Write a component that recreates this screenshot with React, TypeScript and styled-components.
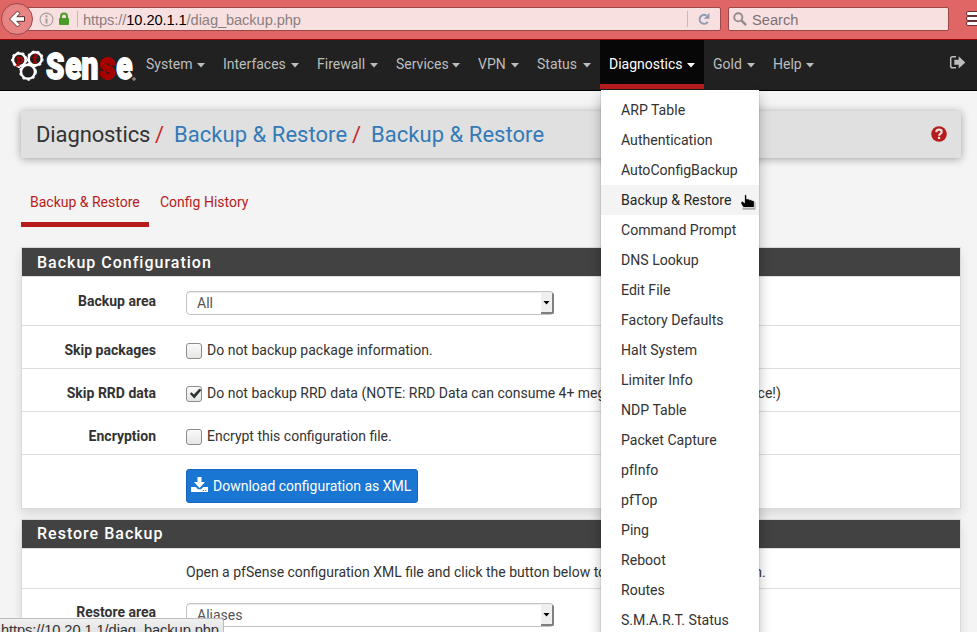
import React from 'react';
import styled, { createGlobalStyle } from 'styled-components';

const Global = createGlobalStyle`
  * { box-sizing: border-box; }
  html, body { margin: 0; padding: 0; overflow: hidden; }
  body { font-family: Roboto, sans-serif; font-size: 14px; line-height: 20px; color: #333; background: #f4f4f4; }
`;

const Screen = styled.div`
  position: relative;
  width: 977px;
  height: 632px;
  overflow: hidden;
`;

/* Browser toolbar */
const Toolbar = styled.div`
  display: flex;
  height: 40px;
  padding-top: 7px;
  background: #e06666;
  border-bottom: 1px solid #980505;
  font-family: 'Liberation Sans', sans-serif;
  font-size: 14.67px;
`;
const Field = styled.div`
  display: flex;
  flex: none;
  align-items: center;
  height: 24px;
  background: #f8e0e0;
  border: 1px solid #9c4848;
  border-radius: 2px;
  white-space: nowrap;
  color: #7d7070;
`;
const UrlField = styled(Field)`
  width: 704px;
  margin-left: 17px;
  padding-left: 21px;
`;
const SearchField = styled(Field)`
  width: 221px;
  margin-left: 7px;
  padding-left: 4px;
`;
const UrlText = styled.span`
  flex: 1;
  margin-left: 5px;
  padding-top: 1px;
  color: #8b7f7f;
  letter-spacing: -0.09px;
  b { font-weight: normal; color: #000; }
`;
const SearchText = styled.span`
  margin-left: 5px;
  padding-top: 1px;
`;
const Divider = styled.i<{ $gap?: number }>`
  width: 1px;
  height: 16px;
  margin-left: ${p => p.$gap ?? 0}px;
  background: #d0b4b4;
`;
const ToolDivider = styled.i`
  width: 1px;
  height: 36px;
  margin: -5px 0 0 5px;
  background: #ea8e8e;
`;
const MenuIcon = styled.svg`
  margin: 4px 0 0 12px;
  flex: none;
`;
const Back = styled.svg`
  position: absolute;
  left: 0;
  top: 2px;
`;
const Lock = styled.svg`margin-left: 4px;`;
const Reload = styled.svg`margin: 0 9px;`;

/* Navigation bar */
const Nav = styled.nav`
  display: flex;
  height: 51px;
  background: #212121;
  border-bottom: 1px solid #000;
`;
const Brand = styled.svg`
  width: 137px;
  height: 50px;
  flex: none;
`;
const NavItem = styled.a<{ $w: number; $active?: boolean }>`
  display: flex;
  width: ${p => p.$w}px;
  height: 49px;
  padding: 14px 0 0 9px;
  color: ${p => (p.$active ? '#fff' : '#bdbdbd')};
  background: ${p => (p.$active ? '#070707' : 'transparent')};
  border-bottom: ${p => (p.$active ? '5px solid #b71c1c' : '0')};
`;
const NavLabel = styled.span`flex: 1;`;
const Caret = styled.i`
  width: 8px;
  height: 4.5px;
  margin: 9px 9px 0 0;
  background: currentColor;
  clip-path: polygon(0 0, 100% 0, 50% 100%);
`;
const Exit = styled.svg`margin: 14px 11px 0 auto;`;

/* Page */
const Page = styled.main`
  padding: 20px 16px 0 21px;
`;
const Crumbs = styled.header`
  display: flex;
  align-items: center;
  height: 47px;
  padding: 0 14px 0 15px;
  background: #e0e0e0;
  border-radius: 2px;
  box-shadow: 0 1px 8px rgba(0, 0, 0, 0.35);
  font-size: 22px;
  svg { margin: -1px 0 0 auto; }
`;
const Crumb = styled.span<{ $w: number; $link?: boolean }>`
  width: ${p => p.$w}px;
  letter-spacing: ${p => (p.$link ? 0.04 : -0.12)}px;
  color: ${p => (p.$link ? '#337ab7' : '#333')};
`;
const Slash = styled.span`
  width: 19px;
  color: #c62828;
`;
const Tabs = styled.div`
  display: flex;
  height: 36px;
  margin: 33px 0 20px;
`;
const Tab = styled.a<{ $active?: boolean; $w: number }>`
  width: ${p => p.$w}px;
  margin-right: 2px;
  padding: 1px 0 0 9px;
  color: #b71c1c;
  border-bottom: ${p => (p.$active ? '5px solid #b71c1c' : '0')};
`;
const Panel = styled.section`
  width: 940px;
  margin-bottom: 10px;
  background: #fff;
  border: 1px solid #dadada;
  box-shadow: 0 6px 10px rgba(0, 0, 0, 0.1);
`;
const PanelTitle = styled.h2<{ $pad: number }>`
  height: 28px;
  margin: 0;
  padding: ${p => p.$pad}px 15px 0;
  background: #424242;
  color: #fff;
  font-size: 16px;
  font-weight: 500;
  line-height: 20px;
  letter-spacing: 1px;
`;
const Row = styled.div<{ $h: number; $pad?: number }>`
  display: flex;
  height: ${p => p.$h}px;
  padding-top: ${p => p.$pad ?? 14}px;
  border-top: 1px solid #dedede;
  white-space: nowrap;
`;
const Label = styled.label`
  flex: none;
  width: 134px;
  margin-right: 30px;
  text-align: right;
  font-weight: 700;
`;
const Select = styled.div<{ $drop?: number }>`
  display: flex;
  width: 368px;
  height: 24px;
  margin-top: ${p => p.$drop ?? 0}px;
  border: 1px solid #c4c4c4;
  border-radius: 4px;
  box-shadow: inset 0 1px 1px rgba(0, 0, 0, 0.08);
  padding-left: 10px;
  color: #555;
  line-height: 22px;
`;
const SelectArrow = styled.span`
  display: flex;
  align-items: center;
  justify-content: center;
  width: 13px;
  height: 21px;
  margin: 1px -1px 0 auto;
  background: #efefef;
  border-right: 2px solid #808080;
  border-bottom: 2px solid #808080;
  border-radius: 0 2px 2px 0;
  &::after {
    content: '';
    width: 7px;
    height: 4px;
    background: #000;
    clip-path: polygon(0 0, 100% 0, 50% 100%);
  }
`;
const Check = styled.span`
  display: block;
  flex: none;
  width: 16px;
  height: 16px;
  margin: 3px 5px 0 0;
  border: 1px solid #8c8c88;
  border-radius: 3px;
  background: linear-gradient(#fafafa, #e6e6e4);
  svg { display: block; margin: -1px 0 0 0; }
`;
const Button = styled.button`
  display: flex;
  width: 232px;
  height: 34px;
  padding: 6px 0 0 4px;
  border: 1px solid #1565c0;
  border-radius: 3px;
  background: #1976d2;
  color: #fff;
  font: 14px/20px Roboto, sans-serif;
  white-space: nowrap;
  svg { margin: 0 5px 0 0; flex: none; }
`;

/* Overlays */
const Menu = styled.div`
  position: absolute;
  left: 601px;
  top: 90px;
  width: 158px;
  height: 560px;
  padding-top: 5px;
  background: #fff;
  box-shadow: 0 6px 12px rgba(0, 0, 0, 0.28), 0 0 1px rgba(0, 0, 0, 0.4);
`;
const MenuItem = styled.a<{ $hover?: boolean }>`
  display: block;
  height: 30px;
  padding: 5px 0 0 20px;
  color: ${p => (p.$hover ? '#262626' : '#333')};
  background: ${p => (p.$hover ? '#f4f4f4' : 'transparent')};
  font-size: 14.1px;
  white-space: nowrap;
`;
const Pointer = styled.svg`
  position: absolute;
  left: 740px;
  top: 193px;
`;
const StatusBar = styled.div`
  position: absolute;
  left: 0;
  top: 618px;
  width: 224px;
  height: 22px;
  padding: 1px 0 0 1px;
  background: linear-gradient(#f0f0f0, #dedede);
  border: 1px solid #bdbdbd;
  border-left: 0;
  border-radius: 0 3px 0 0;
  color: #333;
  font: 14.67px/20px 'Liberation Sans', sans-serif;
  letter-spacing: -0.09px;
`;

const nav: [string, number][] = [
  ['System', 77], ['Interfaces', 94], ['Firewall', 79], ['Services', 82], ['VPN', 59],
  ['Status', 72], ['Diagnostics', 104], ['Gold', 60], ['Help', 59],
];
const menu = ['ARP Table', 'Authentication', 'AutoConfigBackup', 'Backup & Restore', 'Command Prompt',
  'DNS Lookup', 'Edit File', 'Factory Defaults', 'Halt System', 'Limiter Info', 'NDP Table',
  'Packet Capture', 'pfInfo', 'pfTop', 'Ping', 'Reboot', 'Routes', 'S.M.A.R.T. Status'];

const Logo = () => (
  <Brand viewBox="0 0 137 50">
    <g fill="none" stroke="#fff" strokeWidth="2.4">
      <circle cx="19.3" cy="19.8" r="6.3" />
      <circle cx="35.2" cy="18.8" r="6.5" />
      <circle cx="28" cy="31.8" r="7" />
    </g>
    <g fill="none" stroke="#fff" strokeWidth="1.2" strokeDasharray="2.5 3">
      <circle cx="19.3" cy="19.8" r="7.6" />
      <circle cx="35.2" cy="18.8" r="7.8" />
      <circle cx="28" cy="31.8" r="8.3" />
    </g>
    <g fill="#a80000" fontFamily="Liberation Serif, serif" fontWeight="700" fontSize="13" stroke="#a80000" strokeWidth=".5">
      <text x="16" y="23">p</text>
      <text x="32.5" y="23">f</text>
    </g>
    <g fill="#fff" stroke="#fff" strokeWidth="1.8" fontFamily="Roboto, sans-serif" fontWeight="900">
      <text transform="translate(46 39) scale(.78 1)" fontSize="37.5">S</text>
      <text transform="translate(65.3 39) scale(.6 1)" fontSize="39" textLength="55" lengthAdjust="spacingAndGlyphs">en</text>
      <text transform="translate(99.3 39) scale(.6 1)" fontSize="39" textLength="26.5" lengthAdjust="spacingAndGlyphs" fill="#a80000" stroke="#a80000">s</text>
      <text transform="translate(116.3 39) scale(.6 1)" fontSize="39" textLength="27" lengthAdjust="spacingAndGlyphs">e</text>
    </g>
    <circle cx="134" cy="39" r="1.4" fill="#777" stroke="#aaa" strokeWidth=".6" />
  </Brand>
);

const CheckBox = ({ on }: { on?: boolean }) => (
  <Check>
    {on && (
      <svg width="15" height="15" viewBox="0 0 15 15">
        <path d="M2.8 7.8l1.7-1.5 2.4 2.3 5.4-5.8 2.2 1.1L7.3 12.5z" fill="#2e3436" />
      </svg>
    )}
  </Check>
);

export default function App() {
  return (
    <Screen>
      <Global />
      <Toolbar>
        <UrlField>
          <svg width="15" height="15" viewBox="0 0 15 15">
            <circle cx="7.5" cy="7.5" r="6.4" fill="none" stroke="#a79c9c" strokeWidth="1.1" />
            <path d="M6.5 3.2h2v2h-2zM6.5 6.5h2v5h-2z" fill="#a79c9c" />
          </svg>
          <Lock width="12" height="14" viewBox="0 0 12 14">
            <path d="M3 7V4.4a3 3 0 016 0V7" fill="none" stroke="#4e9a29" strokeWidth="2" />
            <rect x="1" y="6" width="10" height="7" rx="1" fill="#4e9a29" />
          </Lock>
          <Divider $gap={7} />
          <UrlText>https://<b>10.20.1.1</b>/diag_backup.php</UrlText>
          <Divider />
          <Reload width="14" height="14" viewBox="0 0 14 14">
            <path d="M10.8 9.9A4.5 4.5 0 1 1 9.5 3.5" fill="none" stroke="#8c9db2" strokeWidth="2" />
            <path d="M12.5 .8v6H6.7z" fill="#8c9db2" />
          </Reload>
        </UrlField>
        <SearchField>
          <svg width="14" height="14" viewBox="0 0 14 14" fill="none" stroke="#968a88">
            <circle cx="5.3" cy="5.3" r="4.1" strokeWidth="1.9" />
            <path d="M8.3 8.3l4.8 4.8" strokeWidth="2.4" />
          </svg>
          <SearchText>Search</SearchText>
        </SearchField>
        <ToolDivider />
        <MenuIcon width="18" height="15" viewBox="0 0 18 15" fill="#fff" stroke="#6a3030">
          <rect x=".5" y=".5" width="17" height="4" rx="1.5" />
          <rect x=".5" y="5.5" width="17" height="4" rx="1.5" />
          <rect x=".5" y="10.5" width="17" height="4" rx="1.5" />
        </MenuIcon>
      </Toolbar>
      <Back width="34" height="34" viewBox="0 0 34 34">
        <circle cx="17" cy="17" r="15.5" fill="#e88484" stroke="#9c4848" />
        <path d="M9.5 17L17.5 9l2.5 2.5-3.2 3.2H24.5v4.6H16.8l3.2 3.2-2.5 2.5z" fill="#fff" stroke="#5a2c2c" />
      </Back>
      <Nav>
        <Logo />
        {nav.map(([name, w]) => (
          <NavItem key={name} $w={w} $active={name === 'Diagnostics'}>
            <NavLabel>{name}</NavLabel>
            <Caret />
          </NavItem>
        ))}
        <Exit width="17" height="16" viewBox="0 0 17 16">
          <path d="M7 2.7H3.5a1.8 1.8 0 00-1.8 1.8v7.5a1.8 1.8 0 001.8 1.8H7" fill="none" stroke="#bdbdbd" strokeWidth="1.5" />
          <path d="M5.3 5.7h4.4V2.2l6.6 6.2-6.6 6.2v-3.9H5.3z" fill="#bdbdbd" />
        </Exit>
      </Nav>
      <Page>
        <Crumbs>
          <Crumb $w={119}>Diagnostics</Crumb>
          <Slash>/</Slash>
          <Crumb $w={178} $link>Backup &amp; Restore</Crumb>
          <Slash>/</Slash>
          <Crumb $w={178} $link>Backup &amp; Restore</Crumb>
          <svg width="16" height="16" viewBox="0 0 16 16">
            <circle cx="8" cy="8" r="7.8" fill="#b71c1c" />
            <path d="M5.2 6.2C5.400 4.500 6.500 3.700 8 3.700c1.600 0 2.700.9 2.700 2.200C10.700 7.700 8.100 7.700 8.100 9.800" fill="none" stroke="#e6e0e0" strokeWidth="2.2" />
            <path d="M6.900 10.800h2.300v2.200H6.900z" fill="#e6e0e0" />
          </svg>
        </Crumbs>
        <Tabs>
          <Tab $active $w={128}>Backup &amp; Restore</Tab>
          <Tab $w={110}>Config History</Tab>
        </Tabs>
        <Panel>
          <PanelTitle $pad={5}>Backup Configuration</PanelTitle>
          <Row $h={49}>
            <Label>Backup area</Label>
            <Select>All<SelectArrow /></Select>
          </Row>
          <Row $h={43}>
            <Label>Skip packages</Label><CheckBox />Do not backup package information.
          </Row>
          <Row $h={43}>
            <Label>Skip RRD data</Label><CheckBox on />Do not backup RRD data (NOTE: RRD Data can consume 4+ megabytes of config.xml space!)
          </Row>
          <Row $h={43}>
            <Label>Encryption</Label><CheckBox />Encrypt this configuration file.
          </Row>
          <Row $h={54}>
            <Label />
            <Button>
              <svg width="17" height="18" viewBox="0 0 17 18" fill="#fff">
                <path d="M6.5 1h4v5H14l-5.500 6L3 6h3.500z" />
                <path d="M0 11h4.800l2.200 2.200h3l2.200-2.200H17v5H0zM11.800 14v1h1v-1zm2.400 0v1h1v-1z" fillRule="evenodd" />
              </svg>
              Download configuration as XML
            </Button>
          </Row>
        </Panel>
        <Panel>
          <PanelTitle $pad={4}>Restore Backup</PanelTitle>
          <Row $h={40} $pad={13}>
            <Label />Open a pfSense configuration XML file and click the button below to restore the configuration.
          </Row>
          <Row $h={60} $pad={13}>
            <Label>Restore area</Label>
            <Select $drop={1}>Aliases<SelectArrow /></Select>
          </Row>
        </Panel>
      </Page>
      <Menu>
        {menu.map(m => <MenuItem key={m} $hover={m === 'Backup & Restore'}>{m}</MenuItem>)}
      </Menu>
      <Pointer width="18" height="18" viewBox="0 0 18 18">
        <path d="M2.5 15.8h12v-7" stroke="#aaa" strokeWidth="2" fill="none" />
        <path d="M4.5 3Q4.5 1.500 5.500 1.500T6.700 3V6l1.500-.3 1.200 1.100 1.500-.3 1.200 1.100 1.200-.2q1 .3 1 1.600V14.500H3.500L1 11V8.500q1.500-.8 2.500 .5l1 .8z" fill="#000" stroke="#fff" strokeWidth=".7" />
      </Pointer>
      <StatusBar>https://10.20.1.1/diag_backup.php</StatusBar>
    </Screen>
  );
}
